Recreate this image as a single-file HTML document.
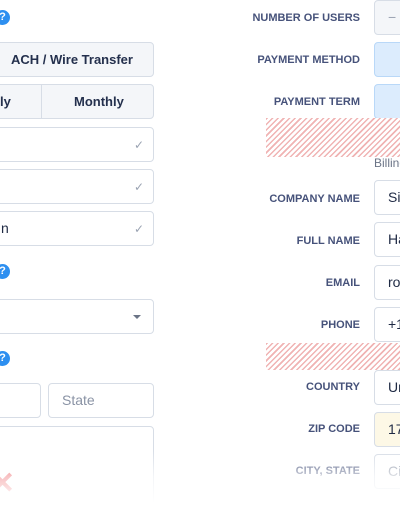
<!DOCTYPE html>
<html><head><meta charset="utf-8"><style>
body{margin:0;width:400px;height:516px;overflow:hidden;background:#fff;font-family:"Liberation Sans",sans-serif;position:relative}
.a{position:absolute;box-sizing:border-box}
.box{border:1px solid #d7dde6;border-radius:4px;background:#fff}
.q{width:15px;height:15px;border-radius:50%;background:#2d8ff0;color:#fff;font-size:11px;font-weight:bold;text-align:center;line-height:15px}
.lbl{right:40px;width:200px;text-align:right;font-size:11px;font-weight:bold;color:#46527a;letter-spacing:0}
.chk{font-size:12px;color:#9aa3b2}
.hatch{background:repeating-linear-gradient(135deg,#f0b3b3 0 1.5px,#fff 1.5px 4px)}
.t{font-size:14px;color:#1f2a44;line-height:33px;padding-left:13px}
</style></head><body>
<div class="a q" style="left:-5px;top:10px">?</div>
<div class="a box" style="left:-20px;top:42px;width:174px;height:35px;background:#f4f6f9;text-align:center;line-height:33px;font-size:13px;font-weight:bold;color:#24304d;padding-left:10px">ACH / Wire Transfer</div>
<div class="a box" style="left:-20px;top:84px;width:174px;height:35px;background:#f4f6f9;font-size:13px;font-weight:bold;color:#24304d;line-height:33px">
<span style="position:absolute;left:14px">rly</span><div class="a" style="left:60px;top:0;width:1px;height:33px;background:#d7dde6"></div><span style="position:absolute;left:93px">Monthly</span></div>
<div class="a box" style="left:-20px;top:127px;width:174px;height:35px"><span class="a chk" style="left:153px;top:10px">✓</span></div>
<div class="a box" style="left:-20px;top:169px;width:174px;height:35px"><span class="a chk" style="left:153px;top:10px">✓</span></div>
<div class="a box" style="left:-20px;top:211px;width:174px;height:35px;font-size:14px;color:#1f2a44"><span class="a" style="left:20px;top:8px">n</span><span class="a chk" style="left:153px;top:10px">✓</span></div>
<div class="a q" style="left:-5px;top:264px">?</div>
<div class="a box" style="left:-20px;top:299px;width:174px;height:35px"><div class="a" style="left:152px;top:15px;border:4px solid transparent;border-top:4px solid #6b7486;border-bottom:0"></div></div>
<div class="a q" style="left:-5px;top:351px">?</div>
<div class="a box" style="left:-20px;top:383px;width:61px;height:35px"></div>
<div class="a box" style="left:48px;top:383px;width:106px;height:35px;font-size:14px;color:#8a93a5;line-height:33px;padding-left:13px">State</div>
<div class="a box" style="left:-20px;top:426px;width:174px;height:90px"></div>
<div class="a" style="left:-10px;top:466px;font-size:30px;color:#e8383d;font-weight:bold">✕</div>

<div class="a lbl" style="top:12px">NUMBER OF USERS</div>
<div class="a box" style="left:374px;top:0;width:60px;height:35px;background:#f4f6f9;color:#9aa3b2" ><span class="t" style="color:#9aa3b2">−</span></div>
<div class="a lbl" style="top:54px">PAYMENT METHOD</div>
<div class="a box" style="left:374px;top:42px;width:60px;height:35px;background:#dcecfd;border-color:#b9d8f8"></div>
<div class="a lbl" style="top:96px">PAYMENT TERM</div>
<div class="a box" style="left:374px;top:84px;width:60px;height:35px;background:#dcecfd;border-color:#b9d8f8"></div>
<div class="a hatch" style="left:266px;top:118px;width:134px;height:39px"></div>
<div class="a" style="left:374px;top:156px;font-size:12px;color:#6b7486">Billing</div>
<div class="a lbl" style="top:193px">COMPANY NAME</div>
<div class="a box t" style="left:374px;top:180px;width:60px;height:35px">Sie</div>
<div class="a lbl" style="top:235px">FULL NAME</div>
<div class="a box t" style="left:374px;top:222px;width:60px;height:35px">Ha</div>
<div class="a lbl" style="top:277px">EMAIL</div>
<div class="a box t" style="left:374px;top:265px;width:60px;height:35px">ro</div>
<div class="a lbl" style="top:319px">PHONE</div>
<div class="a box t" style="left:374px;top:307px;width:60px;height:35px">+1</div>
<div class="a hatch" style="left:266px;top:343px;width:134px;height:27px"></div>
<div class="a lbl" style="top:381px">COUNTRY</div>
<div class="a box t" style="left:374px;top:370px;width:60px;height:35px">Un</div>
<div class="a lbl" style="top:423px">ZIP CODE</div>
<div class="a box t" style="left:374px;top:412px;width:60px;height:35px;background:#fdf8e6">17</div>
<div class="a lbl" style="top:465px">CITY, STATE</div>
<div class="a box t" style="left:374px;top:454px;width:60px;height:35px;color:#8a93a5">Ci</div>
<div class="a" style="left:0;top:450px;width:400px;height:66px;background:linear-gradient(rgba(255,255,255,0),rgba(255,255,255,.7) 40%,#fff 80%)"></div>
</body></html>
